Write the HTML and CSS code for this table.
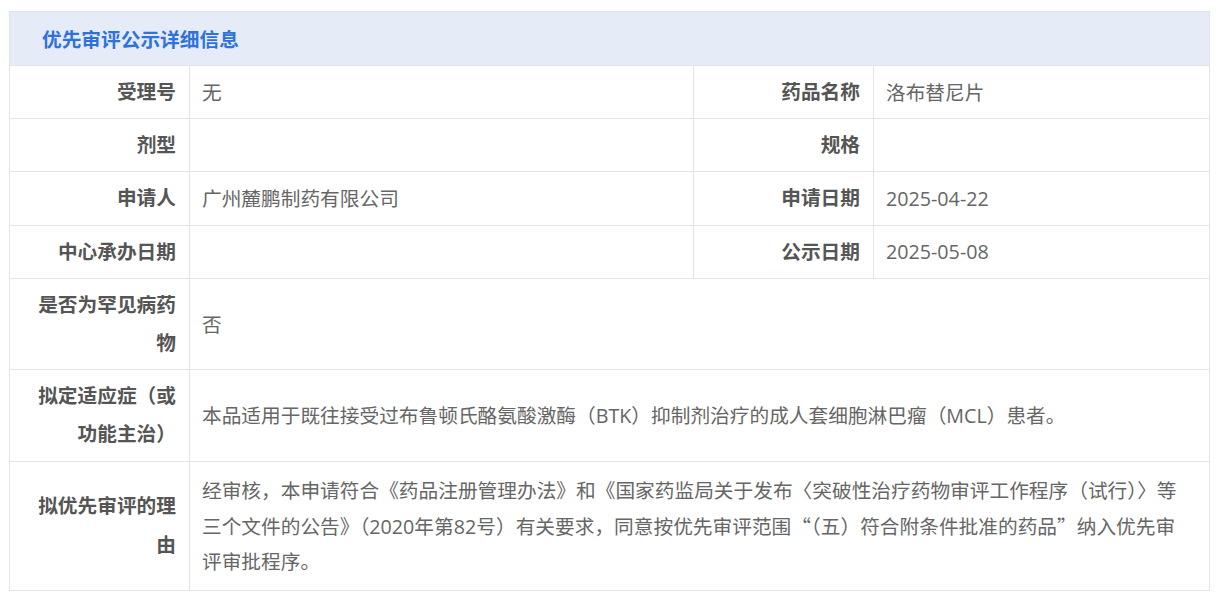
FILE: index.html
```html
<!DOCTYPE html>
<html lang="zh-CN">
<head>
<meta charset="utf-8">
<title>优先审评公示详细信息</title>
<link rel="stylesheet" href="styles.css">
</head>
<body>
<div class="page">
  <table class="info">
    <colgroup>
      <col class="c-label"><col class="c-val1"><col class="c-label"><col class="c-val2">
    </colgroup>
    <thead>
      <tr><th class="title" colspan="4">优先审评公示详细信息</th></tr>
    </thead>
    <tbody>
      <tr>
        <td class="lbl">受理号</td><td class="val">无</td>
        <td class="lbl">药品名称</td><td class="val">洛布替尼片</td>
      </tr>
      <tr>
        <td class="lbl">剂型</td><td class="val"></td>
        <td class="lbl">规格</td><td class="val"></td>
      </tr>
      <tr>
        <td class="lbl">申请人</td><td class="val">广州麓鹏制药有限公司</td>
        <td class="lbl">申请日期</td><td class="val">2025-04-22</td>
      </tr>
      <tr>
        <td class="lbl">中心承办日期</td><td class="val"></td>
        <td class="lbl">公示日期</td><td class="val">2025-05-08</td>
      </tr>
      <tr>
        <td class="lbl">是否为罕见病药物</td><td class="val" colspan="3">否</td>
      </tr>
      <tr>
        <td class="lbl">拟定适应症（或功能主治）</td><td class="val" colspan="3">本品适用于既往接受过布鲁顿氏酪氨酸激酶（BTK）抑制剂治疗的成人套细胞淋巴瘤（MCL）患者。</td>
      </tr>
      <tr>
        <td class="lbl">拟优先审评的理由</td><td class="val val-long" colspan="3">经审核，本申请符合《药品注册管理办法》和《国家药监局关于发布〈突破性治疗药物审评工作程序（试行）〉等三个文件的公告》（2020年第82号）有关要求，同意按优先审评范围<span class="cjk">“</span>（五）符合附条件批准的药品<span class="cjk">”</span>纳入优先审评审批程序。</td>
      </tr>
    </tbody>
  </table>
</div>
</body>
</html>
```

FILE: styles.css
```css
html, body {
  margin: 0;
  padding: 0;
  background: #ffffff;
}

.page {
  padding: 11px 12px 0 9px;
  font-family: "Open Sans", "Noto Sans CJK SC", sans-serif;
}

.info {
  width: 1200px;
  border-collapse: collapse;
  table-layout: fixed;
}

.c-label { width: 180px; }
.c-val1 { width: 504px; }
.c-val2 { width: 336px; }

.title {
  height: 53px;
  padding: 0 0 0 32px;
  text-align: left;
  background: #e5ecf8;
  color: #2f72dc;
  font-size: 19.7px;
  font-weight: bold;
  border: 1px solid #dfe3ea;
  vertical-align: middle;
}

.info td {
  border: 1px solid #e4e4e4;
  font-size: 19.7px;
  vertical-align: middle;
}

.lbl {
  padding: 7px 13px 7px 24px;
  text-align: right;
  font-weight: bold;
  color: #555555;
  line-height: 38.2px;
}

.val {
  padding: 7px 16px 7px 12px;
  text-align: left;
  color: #666666;
  line-height: 35px;
}

.val-long {
  padding-top: 11px;
  padding-bottom: 11px;
}

.cjk {
  font-family: "Noto Sans CJK SC", sans-serif;
}
```
